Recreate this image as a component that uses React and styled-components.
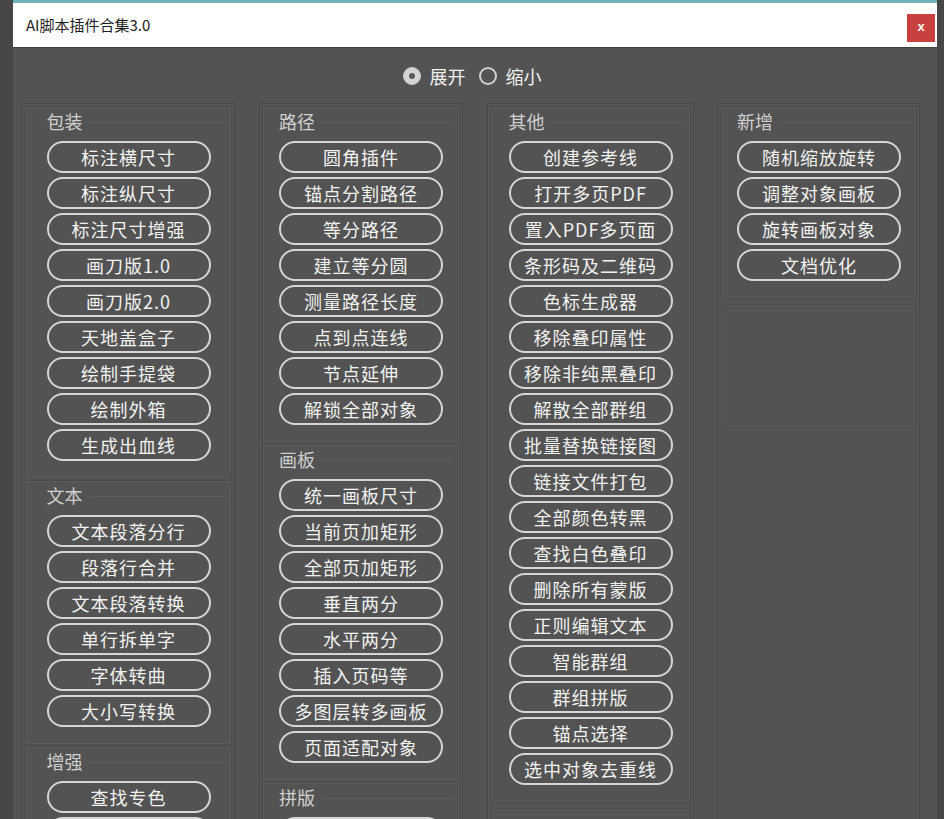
import * as React from "react";
import styled, { createGlobalStyle } from "styled-components";

const columns = [
  [
    {
      title: "包装",
      items: [
        "标注横尺寸",
        "标注纵尺寸",
        "标注尺寸增强",
        "画刀版1.0",
        "画刀版2.0",
        "天地盖盒子",
        "绘制手提袋",
        "绘制外箱",
        "生成出血线",
      ],
    },
    {
      title: "文本",
      items: ["文本段落分行", "段落行合并", "文本段落转换", "单行拆单字", "字体转曲", "大小写转换"],
    },
    { title: "增强", items: ["查找专色", ""] },
  ],
  [
    {
      title: "路径",
      items: [
        "圆角插件",
        "锚点分割路径",
        "等分路径",
        "建立等分圆",
        "测量路径长度",
        "点到点连线",
        "节点延伸",
        "解锁全部对象",
      ],
    },
    {
      title: "画板",
      items: [
        "统一画板尺寸",
        "当前页加矩形",
        "全部页加矩形",
        "垂直两分",
        "水平两分",
        "插入页码等",
        "多图层转多画板",
        "页面适配对象",
      ],
    },
    { title: "拼版", items: [""] },
  ],
  [
    {
      title: "其他",
      items: [
        "创建参考线",
        "打开多页PDF",
        "置入PDF多页面",
        "条形码及二维码",
        "色标生成器",
        "移除叠印属性",
        "移除非纯黑叠印",
        "解散全部群组",
        "批量替换链接图",
        "链接文件打包",
        "全部颜色转黑",
        "查找白色叠印",
        "删除所有蒙版",
        "正则编辑文本",
        "智能群组",
        "群组拼版",
        "锚点选择",
        "选中对象去重线",
      ],
    },
    { empty: true, height: 80 },
  ],
  [
    {
      title: "新增",
      items: ["随机缩放旋转", "调整对象画板", "旋转画板对象", "文档优化"],
    },
    { empty: true, height: 120 },
  ],
];

const App = () => {
  const [mode, setMode] = React.useState("expand");

  return (
    <>
      <GlobalStyle />
      <Window>
        <TitleBar>
          <Title>AI脚本插件合集3.0</Title>
          <CloseButton type="button">x</CloseButton>
        </TitleBar>
        <Body>
          <RadioRow>
            <RadioLabel onClick={() => setMode("expand")}>
              <RadioDot checked={mode === "expand"} />
              展开
            </RadioLabel>
            <RadioLabel onClick={() => setMode("shrink")}>
              <RadioDot checked={mode === "shrink"} />
              缩小
            </RadioLabel>
          </RadioRow>
          <Columns>
            {columns.map((groups, ci) => (
              <Column key={ci}>
                {groups.map((group, gi) =>
                  group.empty ? (
                    <EmptyBox key={gi} height={group.height} />
                  ) : (
                    <Group key={gi}>
                      <LabelRow>{group.title}</LabelRow>
                      <ButtonList>
                        {group.items.map((item, ii) => (
                          <PluginButton key={ii} type="button">
                            {item}
                          </PluginButton>
                        ))}
                      </ButtonList>
                    </Group>
                  )
                )}
              </Column>
            ))}
          </Columns>
        </Body>
      </Window>
    </>
  );
};

export default App;

const GlobalStyle = createGlobalStyle`
  html, body {
    margin: 0;
    padding: 0;
    background: #474747;
    overflow: hidden;
    font-family: "Noto Sans CJK SC", "Noto Sans", sans-serif;
  }
`;

const Window = styled.div`
  margin-left: 13px;
  width: 924px;
  border-top: 3px solid #6fb2b9;
  background: #535353;
  height: 900px;
`;

const TitleBar = styled.div`
  height: 45px;
  background: #ffffff;
  display: flex;
  align-items: center;
  justify-content: space-between;
  padding: 0 2px 0 13px;
  box-sizing: border-box;
  border-bottom: 1px solid #3f3f3f;
`;

const Title = styled.span`
  font-family: "Noto Sans CJK SC", "Noto Sans", sans-serif;
  font-size: 15px;
  color: #1c1c1c;
  line-height: 20px;
`;

const CloseButton = styled.button`
  width: 28px;
  height: 28px;
  border: none;
  margin: 5px 0 0;
  padding: 0 0 2px;
  background: #c8413f;
  color: #ffffff;
  font-family: "Liberation Sans", sans-serif;
  font-weight: bold;
  font-size: 13px;
  line-height: 26px;
  cursor: pointer;
`;

const Body = styled.div`
  padding: 0 17px 0 9px;
`;

const RadioRow = styled.div`
  height: 55px;
  display: flex;
  align-items: center;
  justify-content: center;
  gap: 13px;
  padding-left: 2px;
`;

const RadioLabel = styled.label`
  display: flex;
  align-items: center;
  gap: 9px;
  font-size: 18px;
  line-height: 22px;
  color: #f0f0f0;
  cursor: pointer;
`;

const RadioDot = styled.span`
  position: relative;
  width: 18px;
  height: 18px;
  border-radius: 50%;
  box-sizing: border-box;
  border: 2px solid #d0d0d0;
  background: ${(props) => (props.checked ? "#d6d6d6" : "transparent")};

  &::after {
    content: "";
    display: ${(props) => (props.checked ? "block" : "none")};
    position: absolute;
    left: 50%;
    top: 50%;
    width: 6px;
    height: 6px;
    margin: -3px 0 0 -3px;
    border-radius: 50%;
    background: #5a5a5a;
  }
`;

const Columns = styled.div`
  display: grid;
  grid-template-columns: 213px 204px 207px 202px;
  column-gap: 24px;
  align-items: stretch;
`;

const Column = styled.div`
  min-height: 760px;
  display: flex;
  flex-direction: column;
  gap: 3px;
  padding: 3px;
  border: 1px solid #484848;
  box-shadow: inset 0 0 0 1px #595959;
`;

const Group = styled.div`
  display: grid;
  justify-items: center;
  padding: 3px 0 16px;
  border: 1px solid #5c5c5c;
  box-shadow: 0 0 0 1px #4a4a4a;
`;

const LabelRow = styled.div`
  justify-self: end;
  width: calc(50% + 82px);
  height: 20px;
  display: flex;
  align-items: center;
  font-size: 18px;
  line-height: 20px;
  color: #cfcfcf;

  &::after {
    content: "";
    flex: 1;
    height: 1px;
    margin: 2px 4px 0 6px;
    background: #5c5c5c;
  }
`;

const ButtonList = styled.div`
  display: flex;
  flex-direction: column;
  gap: 4px;
  margin-top: 10px;
`;

const PluginButton = styled.button`
  width: 164px;
  height: 32px;
  box-sizing: border-box;
  margin: 0;
  padding: 0;
  border: 2px solid #d6d6d6;
  border-radius: 16px;
  background: transparent;
  color: #f2f2f2;
  font-family: "Noto Sans CJK SC", "Noto Sans", sans-serif;
  font-size: 18px;
  letter-spacing: 1px;
  line-height: 28px;
  cursor: pointer;

  &:hover {
    background: #5e5e5e;
  }
`;

const EmptyBox = styled.div`
  height: ${(props) => props.height}px;
  margin: 4px 1px 0;
  border: 1px solid #5a5a5a;
  box-shadow: 0 0 0 1px #4a4a4a;
`;
